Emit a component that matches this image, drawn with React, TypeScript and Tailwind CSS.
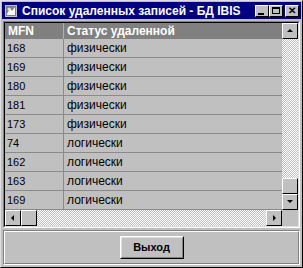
import React from "react";

const rows = [
  { mfn: "168", status: "физически" },
  { mfn: "169", status: "физически" },
  { mfn: "180", status: "физически" },
  { mfn: "181", status: "физически" },
  { mfn: "173", status: "физически" },
  { mfn: "74", status: "логически" },
  { mfn: "162", status: "логически" },
  { mfn: "163", status: "логически" },
  { mfn: "169", status: "логически" },
];

const raised =
  "border border-t-white border-l-white border-r-black border-b-black bg-[#c0c0c0]";

const checker =
  "bg-[repeating-conic-gradient(#ffffff_0_25%,#c0c0c0_0_50%)] bg-[length:2px_2px]";

const TitleButton = ({ children }: { children: React.ReactNode }) => (
  <div className={`w-[14px] h-[12px] flex items-center justify-center ${raised}`}>
    {children}
  </div>
);

const Arrow = ({ dir }: { dir: "up" | "down" | "left" | "right" }) => {
  const pts = {
    up: "1,5 4,2 7,5",
    down: "1,2 4,5 7,2",
    left: "5,1 2,4 5,7",
    right: "3,1 6,4 3,7",
  }[dir];
  return (
    <div className={`w-[16px] h-[16px] flex items-center justify-center ${raised}`}>
      <svg width="8" height="8" viewBox="0 0 8 8">
        <polygon points={pts} fill="#000" />
      </svg>
    </div>
  );
};

export default function App() {
  return (
    <div
      className="w-[303px] h-[268px] bg-[#c0c0c0] flex flex-col border border-t-[#dfdfdf] border-l-[#dfdfdf] border-r-black border-b-black p-[1px] overflow-hidden"
      style={{ fontFamily: '"Liberation Sans", Arial, sans-serif' }}
    >
      {/* title bar */}
      <div className="h-[17px] bg-[#000080] flex items-center pl-[2px] pr-[2px] shrink-0">
        <svg width="14" height="14" viewBox="0 0 14 14" className="shrink-0">
          <rect x="1" y="1" width="12" height="12" fill="#c0c0c0" />
          <rect x="2" y="2" width="10" height="10" fill="#808080" />
          <path d="M3 10 L6 4 L8 7 L11 3 L11 11 L3 11 Z" fill="#ffffff" />
          <circle cx="5" cy="5" r="1.5" fill="#e0e0e0" />
        </svg>
        <span className="ml-[4px] text-white font-bold text-[12px] leading-none whitespace-nowrap">
          Список удаленных записей - БД IBIS
        </span>
        <div className="ml-auto flex items-center">
          <TitleButton>
            <div className="w-[6px] h-[2px] bg-black mt-[6px] mr-[2px]" />
          </TitleButton>
          <TitleButton>
            <div className="w-[8px] h-[7px] border border-black border-t-2" />
          </TitleButton>
          <div className="w-[2px]" />
          <TitleButton>
            <span className="text-[10px] font-bold leading-none text-black">✕</span>
          </TitleButton>
        </div>
      </div>

      {/* grid */}
      <div className="mt-[2px] mx-[1px] border border-t-[#808080] border-l-[#808080] border-r-white border-b-white shrink-0">
        <div className="border border-t-black border-l-black border-r-[#dfdfdf] border-b-[#dfdfdf] flex flex-col">
          <div className="flex">
            <div className="flex-1 flex flex-col">
              <div className="h-[16px] bg-[#808080] flex text-white font-bold text-[12px]">
                <div className="w-[59px] pl-[3px] flex items-center border-r border-[#b0b0b0]">MFN</div>
                <div className="flex-1 pl-[3px] flex items-center">Статус удаленной</div>
              </div>
              {rows.map((r, i) => (
                <div key={i} className="h-[19px] flex text-black border-b border-[#8a8a8a]">
                  <div className="w-[59px] pl-[2px] flex items-center border-r border-[#8a8a8a] text-[11px]">{r.mfn}</div>
                  <div className="flex-1 pl-[3px] flex items-center text-[12px]">{r.status}</div>
                </div>
              ))}
            </div>
            {/* vertical scrollbar */}
            <div className="w-[16px] flex flex-col">
              <Arrow dir="up" />
              <div className={`flex-1 ${checker}`} />
              <div className={`h-[16px] ${raised}`} />
              <Arrow dir="down" />
            </div>
          </div>
          {/* horizontal scrollbar */}
          <div className="h-[16px] flex">
            <Arrow dir="left" />
            <div className={`w-[16px] h-[16px] ${raised}`} />
            <div className={`flex-1 ${checker}`} />
            <Arrow dir="right" />
            <div className="w-[16px] h-[16px] bg-[#c0c0c0]" />
          </div>
        </div>
      </div>

      {/* bottom panel */}
      <div className="flex-1 mt-[2px] mx-[1px] mb-[1px] border border-t-[#808080] border-l-[#808080] border-r-white border-b-white">
        <div className="h-full border border-t-white border-l-white border-r-[#808080] border-b-[#808080] flex items-center justify-center">
          <div className="w-[64px] h-[23px] border border-t-white border-l-white border-r-black border-b-black">
            <div className="w-full h-full border border-t-[#dfdfdf] border-l-[#dfdfdf] border-r-[#808080] border-b-[#808080] flex items-center justify-center text-[11px] font-bold text-black">
              Выход
            </div>
          </div>
        </div>
      </div>
    </div>
  );
}
